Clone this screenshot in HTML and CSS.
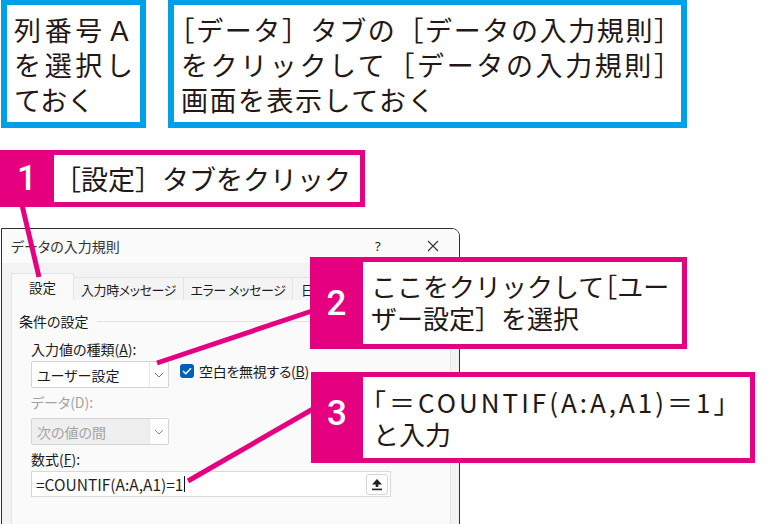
FILE: index.html
```html
<!DOCTYPE html>
<html lang="ja">
  <head>
    <meta charset="utf-8">
    <title>データの入力規則</title>
    <link rel="stylesheet" href="styles.css">
  </head>
  <body>
    <div class="page">
      <div class="notes">
        <div class="note note-col">
          <div class="line just">列番号Ａ</div>
          <div class="line just">を選択し</div>
          <div class="line">ておく</div>
        </div>
        <div class="note note-wide">
          <div class="line just"><span class="half">［</span>データ］タブの［データの入力規則］</div>
          <div class="line just">をクリックして［データの入力規則］</div>
          <div class="line loose">画面を表示しておく</div>
        </div>
      </div>

      <div class="callout callout-1">
        <div class="num">1</div>
        <div class="callout-text">［設定］タブをクリック</div>
      </div>

      <div class="dialog">
        <div class="titlebar">
          <span class="title">データの入力規則</span>
          <span class="title-help">?</span>
          <svg class="title-close" width="12" height="12" viewBox="0 0 12 12">
            <path d="M1 1 L11 11 M11 1 L1 11" stroke="#333" stroke-width="1.1" fill="none"/>
          </svg>
        </div>
        <div class="tabs">
          <div class="tab active">設定</div>
          <div class="tab">入力時メッセージ</div>
          <div class="tab">エラー メッセージ</div>
          <div class="tab tab-cut">日本語入力</div>
        </div>
        <div class="panel">
          <div class="group-head">条件の設定</div>
          <div class="field-label">入力値の種類(<u>A</u>):</div>
          <div class="row">
            <div class="select">
              <span class="select-value">ユーザー設定</span>
              <span class="select-arrow">
                <svg width="10" height="6" viewBox="0 0 10 6"><path d="M1 1 L5 5 L9 1" stroke="#777" stroke-width="1" fill="none"/></svg>
              </span>
            </div>
            <label class="check">
              <span class="check-box">
                <svg width="10" height="8" viewBox="0 0 10 8"><path d="M1 4 L3.8 6.8 L9 1.2" stroke="#fff" stroke-width="1.4" fill="none"/></svg>
              </span>
              <span class="check-label">空白を無視する(<u>B</u>)</span>
            </label>
          </div>
          <div class="field-label disabled">データ(D):</div>
          <div class="row">
            <div class="select select-disabled">
              <span class="select-value">次の値の間</span>
              <span class="select-arrow">
                <svg width="10" height="6" viewBox="0 0 10 6"><path d="M1 1 L5 5 L9 1" stroke="#888" stroke-width="1" fill="none"/></svg>
              </span>
            </div>
          </div>
          <div class="field-label">数式(<u>F</u>):</div>
          <div class="formula">
            <span class="formula-text">=COUNTIF(A:A,A1)=1</span><span class="caret"></span>
            <span class="formula-btn">
              <svg width="12" height="13" viewBox="0 0 12 13">
                <path d="M6 1 L11 6.5 L7.3 6.5 L7.3 9 L4.7 9 L4.7 6.5 L1 6.5 Z" fill="#222"/>
                <rect x="1" y="10.6" width="10" height="1.6" fill="#222"/>
              </svg>
            </span>
          </div>
        </div>
      </div>

      <svg class="leaders" width="783" height="524" viewBox="0 0 783 524">
        <line x1="22" y1="205" x2="39" y2="277"/>
        <line x1="157" y1="363" x2="312" y2="311"/>
        <line x1="188" y1="481" x2="313" y2="409"/>
      </svg>

      <div class="callout callout-2">
        <div class="num">2</div>
        <div class="callout-text">
          <div class="line">ここをクリックして<span class="half">［</span>ユー</div>
          <div class="line">ザー設定］を選択</div>
        </div>
      </div>

      <div class="callout callout-3">
        <div class="num">3</div>
        <div class="callout-text">
          <div class="line formula-line"><span class="half">「</span>＝COUNTIF(A:A,A1)＝1」</div>
          <div class="line">と入力</div>
        </div>
      </div>
    </div>
  </body>
</html>
```

FILE: styles.css
```css
html {
  font-family: "Noto Sans CJK JP", "Noto Sans", sans-serif;
  color: #231815;
}

body {
  margin: 0;
  background: #fff;
}

.page {
  position: relative;
  width: 783px;
  height: 524px;
  overflow: hidden;
}

/* half-width bracket at the start of a line */
.half {
  font-feature-settings: "halt";
}

/* blue notes on top */
.notes {
  display: flex;
  column-gap: 22px;
  margin-top: -1px;
  margin-left: 1px;
}

.note {
  box-sizing: border-box;
  height: 129px;
  border: 6px solid #00a0e9;
  background: #fff;
  font-size: 27px;
  line-height: 35px;
  white-space: nowrap;
}

.note-col {
  width: 145px;
  padding: 7px 7px 0 7px;
}

.note-wide {
  width: 519px;
  padding: 7px 0 0 7px;
}

.line.just {
  text-align: justify;
  text-align-last: justify;
}

.line.loose {
  letter-spacing: 1.5px;
}

/* pink callouts */
.callout {
  display: flex;
  box-sizing: border-box;
  background: #e4007f;
  padding: 5px 5px 5px 0;
}

.num {
  display: flex;
  align-items: center;
  justify-content: center;
  color: #fff;
  font-family: Roboto, "Noto Sans", sans-serif;
  font-weight: 500;
  font-size: 35px;
}

.callout-text {
  flex: 1;
  background: #fff;
  font-size: 26px;
  white-space: nowrap;
}

.callout-1 {
  width: 365px;
  height: 57px;
  margin-top: 22px;
}

.callout-1 .num {
  width: 54px;
}

.callout-1 .callout-text {
  padding-left: 0;
  font-size: 27px;
  line-height: 47px;
}

.callout-2 {
  position: absolute;
  left: 310px;
  top: 257px;
  width: 377px;
  height: 92px;
}

.callout-2 .num {
  width: 53px;
}

.callout-2 .callout-text {
  padding: 8px 0 0 8px;
  line-height: 32px;
}

.callout-3 {
  position: absolute;
  left: 311px;
  top: 372px;
  width: 444px;
  height: 91px;
}

.callout-3 .num {
  width: 52px;
  padding-bottom: 8px;
}

.callout-3 .callout-text {
  padding: 9px 0 0 10px;
  line-height: 32px;
}

.formula-line {
  letter-spacing: 3px;
}

.leaders {
  position: absolute;
  left: 0;
  top: 0;
  pointer-events: none;
}

.leaders line {
  stroke: #e4007f;
  stroke-width: 5;
}

/* the Windows dialog */
.dialog {
  box-sizing: border-box;
  width: 459px;
  height: 300px;
  margin-top: 21px;
  margin-left: 1px;
  border: 1px solid #2e2e2e;
  border-radius: 0 8px 0 0;
  background: #f3f3f3;
  color: #1b1b1b;
  font-size: 14px;
  font-feature-settings: "palt";
  overflow: hidden;
}

.titlebar {
  display: flex;
  align-items: center;
  height: 34px;
  padding-left: 9px;
  background: #fbfbfb;
}

.title {
  flex: 1;
  color: #333;
}

.title-help {
  width: 12px;
  margin-right: 40px;
  font-family: "Noto Sans", sans-serif;
  font-size: 13px;
}

.title-close {
  margin-right: 20px;
}

.tabs {
  display: flex;
  align-items: flex-end;
  height: 27px;
  margin-top: 10px;
  padding-left: 9px;
}

.tab {
  box-sizing: border-box;
  height: 23px;
  display: flex;
  align-items: center;
  justify-content: center;
  border: 1px solid #e3e3e3;
  border-bottom: none;
  border-left: none;
  background: #f4f4f4;
  font-size: 13px;
  letter-spacing: -0.4px;
  white-space: nowrap;
  overflow: hidden;
}

.tab:nth-child(2) { width: 110px; }
.tab:nth-child(3) { width: 109px; }

.tab-cut {
  width: 20px;
  justify-content: flex-start;
  padding-left: 8px;
  border-right: none;
}

.tab.active {
  width: 63px;
  height: 27px;
  border-left: 1px solid #e3e3e3;
  background: #fafafa;
  font-size: 13.5px;
  letter-spacing: 0;
}

.panel {
  box-sizing: border-box;
  width: 440px;
  height: 230px;
  margin-left: 9px;
  padding: 11px 0 0 7px;
  border: 1px solid #e3e3e3;
  border-top: none;
  background: #fafafa;
}

.group-head {
  display: flex;
  align-items: center;
  column-gap: 8px;
  height: 20px;
  padding-right: 9px;
}

.group-head::after {
  content: "";
  flex: 1;
  border-top: 1px solid #e2e2e2;
}

.field-label {
  height: 20px;
  line-height: 20px;
  margin-top: 8px;
  padding-left: 12px;
}

.field-label + .row,
.field-label + .formula {
  margin-top: 2px;
}

.row + .field-label {
  margin-top: 4px;
}

.field-label.disabled {
  color: #a3a3a3;
}

.row {
  display: flex;
  align-items: center;
  padding-left: 12px;
}

.select {
  box-sizing: border-box;
  display: flex;
  width: 138px;
  height: 27px;
  border: 1px solid #d4d4d4;
  border-radius: 2px;
  background: #fff;
}

.select-value {
  flex: 1;
  padding-left: 5px;
  line-height: 26px;
}

.select-arrow {
  display: flex;
  align-items: center;
  justify-content: center;
  width: 18px;
  border-left: 1px solid #e6e6e6;
  background: #fdfdfd;
}

.select-disabled {
  margin-top: 4px;
  background: #efefef;
  color: #a3a3a3;
}

.check {
  display: flex;
  align-items: center;
  column-gap: 5px;
  margin-left: 11px;
  margin-top: -7px;
}

.check-label {
  letter-spacing: -0.3px;
}

.check-box {
  display: flex;
  align-items: center;
  justify-content: center;
  width: 14px;
  height: 14px;
  border-radius: 3px;
  background: #005fb8;
}

.formula {
  box-sizing: border-box;
  display: flex;
  align-items: center;
  width: 360px;
  height: 26px;
  margin-left: 12px;
  margin-top: 4px;
  padding-left: 4px;
  border: 1px solid #d9d9d9;
  background: #fff;
  font-feature-settings: normal;
}

.formula-text {
  font-size: 15.5px;
  color: #1f1f1f;
}

.caret {
  width: 1px;
  height: 16px;
  margin-left: 1px;
  background: #111;
}

.formula-btn {
  box-sizing: border-box;
  display: flex;
  align-items: center;
  justify-content: center;
  width: 22px;
  height: 21px;
  margin-left: auto;
  margin-right: 2px;
  border: 1px solid #d6d6d6;
  border-radius: 3px;
  background: #fdfdfd;
}
```
